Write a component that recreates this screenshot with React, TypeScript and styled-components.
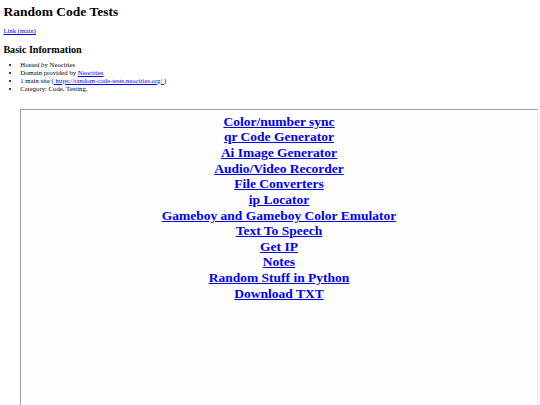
import { createGlobalStyle } from 'styled-components';
import styled from 'styled-components';

const GlobalStyle = createGlobalStyle`
  html, body {
    margin: 0;
    padding: 0;
    overflow: hidden;
    background: #ffffff;
  }
  body {
    font-family: "Liberation Serif", "Times New Roman", serif;
    color: #000000;
  }
`;

const Page = styled.div`
  box-sizing: border-box;
  height: 405px;
  overflow: hidden;
  padding: 4px 0 0 3.4px;
`;

const Title = styled.h1`
  margin: 0;
  font-size: 13.5px;
  line-height: 15.5px;
  font-weight: bold;
`;

const Link = styled.a`
  color: #0000ee;
  text-decoration: underline;
`;

const MainLine = styled.p`
  margin: 7.5px 0 0;
  font-size: 6.75px;
  line-height: 7.8px;
`;

const Heading = styled.h2`
  margin: 9px 0 0;
  font-size: 10.1px;
  line-height: 11.6px;
  font-weight: bold;
`;

const InfoList = styled.ul`
  margin: 5.8px 0 0;
  padding-left: 16.9px;
  font-size: 6.75px;
  line-height: 7.8px;
  list-style: disc;
`;

const Frame = styled.div`
  box-sizing: border-box;
  margin: 16.7px 0 0 16.6px;
  width: 518px;
  height: 320px;
  border-style: solid;
  border-width: 1px;
  border-color: #9c9c9c #e8e8e8 #e8e8e8 #9c9c9c;
  background: #fefefe;
  padding: 3.6px 3.4px;
`;

const ToolList = styled.div`
  display: flex;
  flex-direction: column;
  align-items: center;
`;

const ToolLink = styled.a`
  color: #0000ee;
  text-decoration: underline;
  font-size: 13.5px;
  line-height: 15.64px;
  font-weight: bold;
`;

const tools = [
  'Color/number sync',
  'qr Code Generator',
  'Ai Image Generator',
  'Audio/Video Recorder',
  'File Converters',
  'ip Locator',
  'Gameboy and Gameboy Color Emulator',
  'Text To Speech',
  'Get IP',
  'Notes',
  'Random Stuff in Python',
  'Download TXT',
];

function App() {
  return (
    <>
      <GlobalStyle />
      <Page>
        <Title>Random Code Tests</Title>
        <MainLine>
          <Link href="#">Link (main)</Link>
        </MainLine>
        <Heading>Basic Information</Heading>
        <InfoList>
          <li>Hosted by Neocities</li>
          <li>
            Domain provided by <Link href="#">Neocities</Link>
          </li>
          <li>
            1 main site (<Link href="#">{'\u00a0'}https://random-code-tests.neocities.org/{'\u00a0'}</Link>)
          </li>
          <li>Category: Code, Testing,</li>
        </InfoList>
        <Frame>
          <ToolList>
            {tools.map((tool) => (
              <ToolLink key={tool} href="#">
                {tool}
              </ToolLink>
            ))}
          </ToolList>
        </Frame>
      </Page>
    </>
  );
}

export default App;
